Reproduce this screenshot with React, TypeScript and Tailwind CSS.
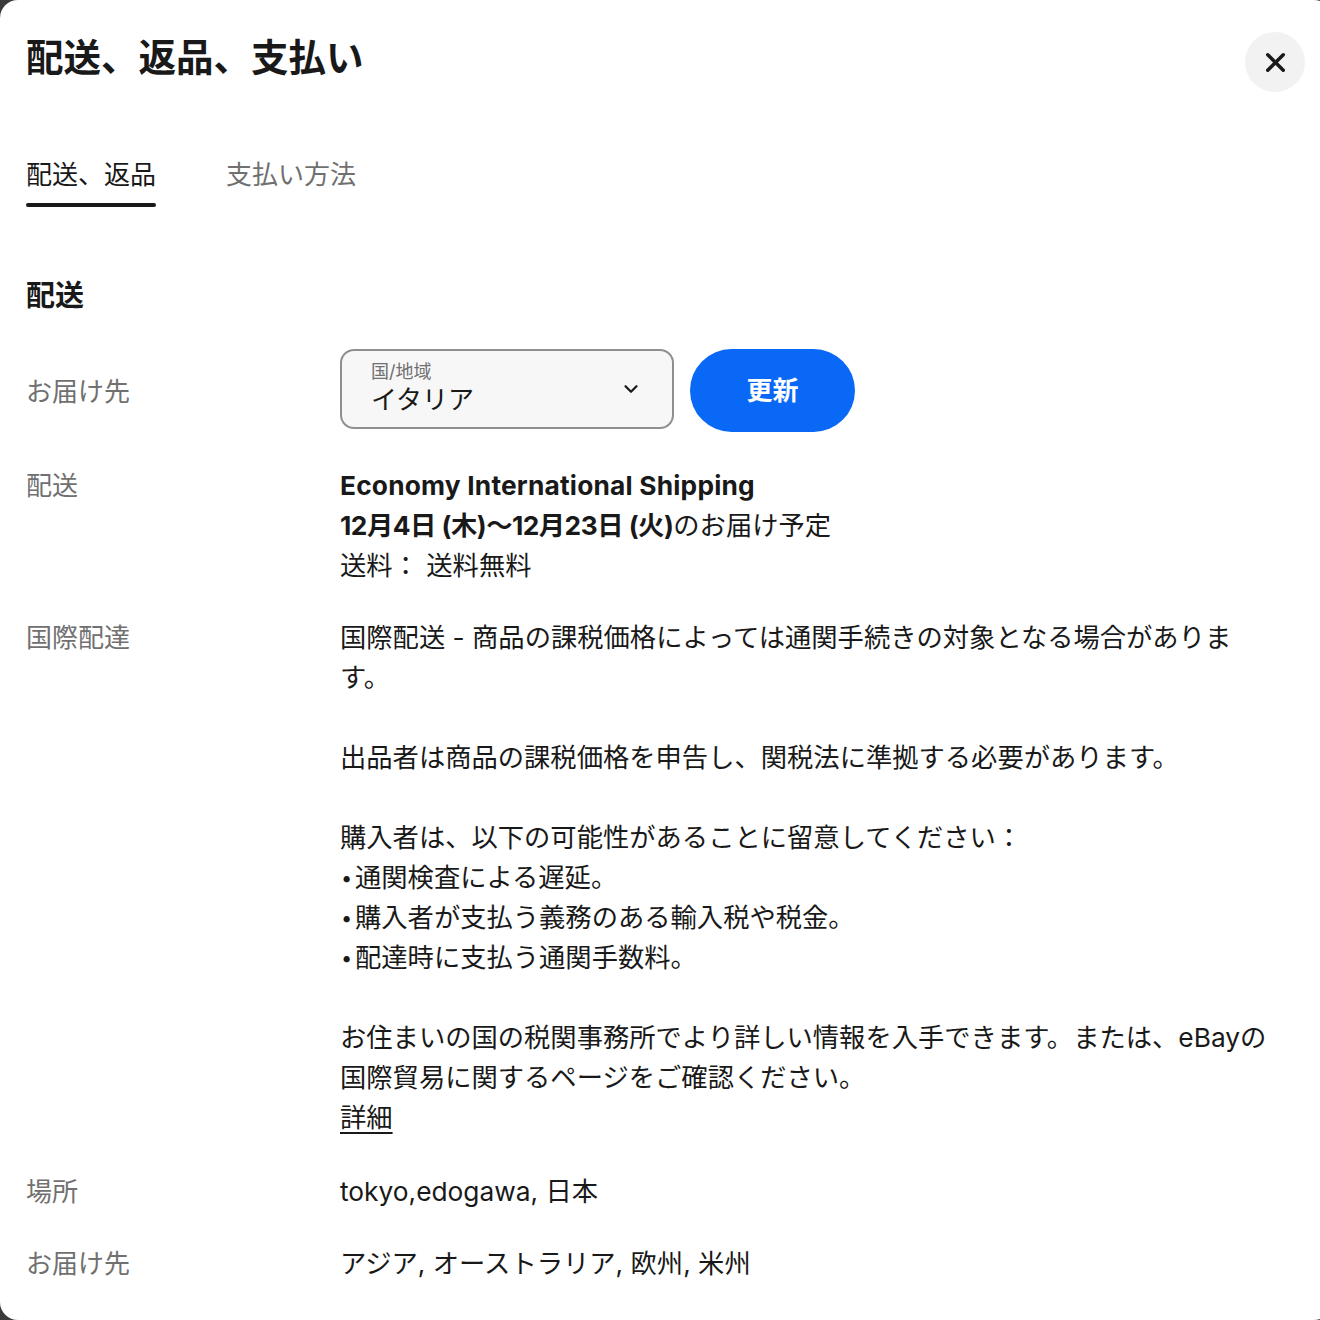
import { ChevronDown, X } from 'lucide-react';

const font = { fontFamily: 'Inter, "Noto Sans CJK JP", sans-serif' };

function Row({ label, children, center }: { label: string; children: React.ReactNode; center?: boolean }) {
  return (
    <div className={`flex ${center ? 'items-center' : 'items-start'}`}>
      <div className="w-[314px] shrink-0 text-[26px] leading-[40px] text-[#707070]">{label}</div>
      <div className="w-[936px] text-[26.3px] leading-[40px] text-[#191919]">{children}</div>
    </div>
  );
}

function Bullet({ children }: { children: React.ReactNode }) {
  return (
    <li className="flex">
      <span className="w-[15px] shrink-0 pl-[1px] text-[20px]">•</span>
      <span>{children}</span>
    </li>
  );
}

export default function App() {
  return (
    <div className="h-[1320px] w-[1320px] overflow-hidden bg-[#3b3b3b]" style={font}>
      <div className="h-[1320px] w-[1332px] rounded-[18px] bg-white pl-[26px] overflow-hidden">
        {/* header */}
        <div className="flex items-start justify-between pt-[32px] pr-[27px]">
          <h1 className="mt-[2px] text-[37.5px] leading-[48px] font-bold text-[#191919]">配送、返品、支払い</h1>
          <button className="flex h-[60px] w-[60px] items-center justify-center rounded-full bg-[#f2f2f2] text-[#191919]">
            <X className="h-[31px] w-[31px]" strokeWidth={2.7} />
          </button>
        </div>

        {/* tabs */}
        <div className="mt-[63px] flex gap-[70px]">
          <div className="flex flex-col">
            <span className="text-[26px] leading-[40px] text-[#191919]">配送、返品</span>
            <span className="mt-[8px] h-[4px] rounded-full bg-[#191919]" />
          </div>
          <span className="text-[26px] leading-[40px] text-[#707070]">支払い方法</span>
        </div>

        <h2 className="mt-[69px] text-[29px] leading-[40px] font-bold text-[#191919]">配送</h2>

        <div className="mt-[33px] flex flex-col gap-[32px]">
          <Row label="お届け先" center>
            <div className="flex items-start gap-[16px] pb-[2px]">
              <div className="flex h-[80px] w-[334px] items-center justify-between rounded-[14px] border-2 border-[#8f8f8f] bg-[#f7f7f7] pl-[29px] pr-[30px]">
                <div className="flex flex-col">
                  <span className="text-[18px] leading-[22px] text-[#707070]">国/地域</span>
                  <span className="text-[26px] leading-[34px] text-[#191919]">イタリア</span>
                </div>
                <ChevronDown className="h-[22px] w-[22px] text-[#191919]" strokeWidth={2.4} />
              </div>
              <button className="h-[83px] w-[165px] rounded-full bg-[#0968f6] text-[26px] font-bold text-white">更新</button>
            </div>
          </Row>

          <Row label="配送">
            <div className="font-bold tracking-[0.2px]">Economy International Shipping</div>
            <div>
              <span className="font-bold tracking-[-0.5px]">12月4日 (木)〜12月23日 (火)</span>のお届け予定
            </div>
            <div>送料： 送料無料</div>
          </Row>

          <Row label="国際配達">
            <p>国際配送 - 商品の課税価格によっては通関手続きの対象となる場合があります。</p>
            <p className="mt-[40px]">出品者は商品の課税価格を申告し、関税法に準拠する必要があります。</p>
            <p className="mt-[40px]">購入者は、以下の可能性があることに留意してください：</p>
            <ul>
              <Bullet>通関検査による遅延。</Bullet>
              <Bullet>購入者が支払う義務のある輸入税や税金。</Bullet>
              <Bullet>配達時に支払う通関手数料。</Bullet>
            </ul>
            <p className="mt-[40px]">お住まいの国の税関事務所でより詳しい情報を入手できます。または、eBayの国際貿易に関するページをご確認ください。</p>
            <div className="pb-[2px]">
              <a className="underline underline-offset-[5px]">詳細</a>
            </div>
          </Row>

          <Row label="場所">tokyo,edogawa, 日本</Row>

          <Row label="お届け先">アジア, オーストラリア, 欧州, 米州</Row>

          <Row label="除外対象">アラスカ/ハワイ, 米国保護領, 郵便私書箱</Row>
        </div>
      </div>
    </div>
  );
}
